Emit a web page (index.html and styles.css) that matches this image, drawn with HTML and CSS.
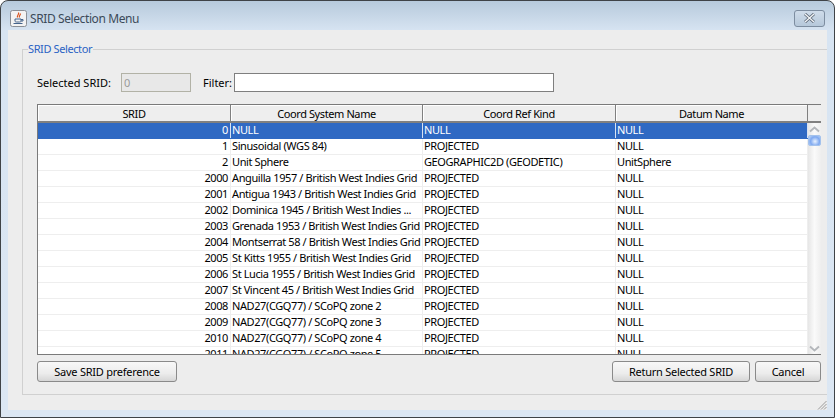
FILE: index.html
```html
<!DOCTYPE html>
<html lang="en">
<head>
    <meta charset="UTF-8">
    <title>SRID Selection Menu</title>
    <link rel="stylesheet" href="styles.css">
</head>
<body>
    <div class="window">
        <div class="titlebar">
            <svg class="app-icon" width="17" height="17" viewBox="0 0 17 17">
                <rect x="0.5" y="0.5" width="16" height="16" rx="2" fill="#f3f3f3" stroke="#8a8f96"/>
                <path d="M8.500 2.500c1 2-2 3-1 5M10.500 3.500c0 2-2 2-1 4" fill="none" stroke="#d9541e" stroke-width="1.200"/>
                <path d="M5 9h6v2c0 1-1 1-2 1H7c-1 0-2 0-2-1zM11 9.500h2v1.500h-2M3.500 13.500h9" fill="none" stroke="#45648c"/>
            </svg>
            <span class="title">SRID Selection Menu</span>
            <button class="close">
                <svg width="13" height="10" viewBox="0 0 13 10"><path d="M2 1l9 8M11 1l-9 8" stroke="#5a6675" stroke-width="3" fill="none"/><path d="M2 1l9 8M11 1l-9 8" stroke="#f2f4f6" stroke-width="1.400" fill="none"/></svg>
            </button>
        </div>
        <div class="content">
            <div class="selector">
                <span class="legend">SRID Selector</span>
                <div class="form-row">
                    <label class="srid-label">Selected SRID:</label>
                    <input class="srid-input" type="text" value="0" disabled>
                    <label class="filter-label">Filter:</label>
                    <input class="filter-input" type="text">
                </div>
                <div class="table-box">
                    <div class="table-main">
                        <div class="row header">
                            <div class="cell">SRID</div>
                            <div class="cell">Coord System Name</div>
                            <div class="cell">Coord Ref Kind</div>
                            <div class="cell">Datum Name</div>
                        </div>
                        <div class="rows" id="rows">
                            <div class="row selected"><div class="cell">0</div><div class="cell">NULL</div><div class="cell">NULL</div><div class="cell">NULL</div></div>
                            <div class="row"><div class="cell">1</div><div class="cell">Sinusoidal (WGS 84)</div><div class="cell">PROJECTED</div><div class="cell">NULL</div></div>
                            <div class="row"><div class="cell">2</div><div class="cell">Unit Sphere</div><div class="cell">GEOGRAPHIC2D (GEODETIC)</div><div class="cell">UnitSphere</div></div>
                            <div class="row"><div class="cell">2000</div><div class="cell">Anguilla 1957 / British West Indies Grid</div><div class="cell">PROJECTED</div><div class="cell">NULL</div></div>
                            <div class="row"><div class="cell">2001</div><div class="cell">Antigua 1943 / British West Indies Grid</div><div class="cell">PROJECTED</div><div class="cell">NULL</div></div>
                            <div class="row"><div class="cell">2002</div><div class="cell">Dominica 1945 / British West Indies ...</div><div class="cell">PROJECTED</div><div class="cell">NULL</div></div>
                            <div class="row"><div class="cell">2003</div><div class="cell">Grenada 1953 / British West Indies Grid</div><div class="cell">PROJECTED</div><div class="cell">NULL</div></div>
                            <div class="row"><div class="cell">2004</div><div class="cell">Montserrat 58 / British West Indies Grid</div><div class="cell">PROJECTED</div><div class="cell">NULL</div></div>
                            <div class="row"><div class="cell">2005</div><div class="cell">St Kitts 1955 / British West Indies Grid</div><div class="cell">PROJECTED</div><div class="cell">NULL</div></div>
                            <div class="row"><div class="cell">2006</div><div class="cell">St Lucia 1955 / British West Indies Grid</div><div class="cell">PROJECTED</div><div class="cell">NULL</div></div>
                            <div class="row"><div class="cell">2007</div><div class="cell">St Vincent 45 / British West Indies Grid</div><div class="cell">PROJECTED</div><div class="cell">NULL</div></div>
                            <div class="row"><div class="cell">2008</div><div class="cell">NAD27(CGQ77) / SCoPQ zone 2</div><div class="cell">PROJECTED</div><div class="cell">NULL</div></div>
                            <div class="row"><div class="cell">2009</div><div class="cell">NAD27(CGQ77) / SCoPQ zone 3</div><div class="cell">PROJECTED</div><div class="cell">NULL</div></div>
                            <div class="row"><div class="cell">2010</div><div class="cell">NAD27(CGQ77) / SCoPQ zone 4</div><div class="cell">PROJECTED</div><div class="cell">NULL</div></div>
                            <div class="row"><div class="cell">2011</div><div class="cell">NAD27(CGQ77) / SCoPQ zone 5</div><div class="cell">PROJECTED</div><div class="cell">NULL</div></div>
                        </div>
                    </div>
                    <div class="scrollbar">
                        <div class="scroll-top"></div>
                        <div class="scroll-track">
                            <svg class="arrow" width="11" height="7" viewBox="0 0 11 7"><path d="M1 5.500l4.500-4 4.500 4" fill="none" stroke="#b4b7bb" stroke-width="1.800"/></svg>
                            <div class="thumb"></div>
                            <svg class="arrow arrow-down" width="11" height="7" viewBox="0 0 11 7"><path d="M1 1.500l4.500 4 4.500-4" fill="none" stroke="#b4b7bb" stroke-width="1.800"/></svg>
                        </div>
                    </div>
                </div>
                <div class="button-row">
                    <button class="btn btn-save">Save SRID preference</button>
                    <button class="btn btn-return">Return Selected SRID</button>
                    <button class="btn btn-cancel">Cancel</button>
                </div>
            </div>
            <svg class="grip" width="10" height="10" viewBox="0 0 10 10"><path d="M9.500 1L1 9.500M9.500 4L4 9.500M9.500 7L7 9.500" stroke="#9a9a9a" fill="none"/></svg>
        </div>
    </div>
</body>
</html>
```
FILE: styles.css
```css
* {
    box-sizing: border-box;
}
html, body {
    margin: 0;
    height: 100%;
    overflow: hidden;
    background: #fff;
}
body {
    font-family: "Noto Sans", "Liberation Sans", sans-serif;
    font-size: 11px;
    color: #000;
}
.window {
    height: 418px;
    display: flex;
    flex-direction: column;
    border: 1px solid #3f4347;
    border-radius: 8px 8px 0 0;
    padding: 0 7px 7px;
    background: linear-gradient(#b7cadc 0, #d7e4f2 30px, #dce7f3 100%);
}
.titlebar {
    height: 29px;
    flex: none;
    display: flex;
    align-items: center;
    padding: 5px 0 0 2px;
}
.app-icon {
    margin-right: 3px;
}
.title {
    font-size: 12px;
    letter-spacing: -0.4px;
    color: #3c4a59;
}
.close {
    margin-left: auto;
    margin-right: 2px;
    width: 31px;
    height: 17px;
    padding: 0;
    display: flex;
    align-items: center;
    justify-content: center;
    border: 1px solid #7d8da0;
    border-radius: 3px;
    background: linear-gradient(#cfdcea, #b6c8da);
}
.content {
    flex: 1;
    position: relative;
    background: #ededed;
    padding: 19px 0 15px 14px;
    display: flex;
}
.selector {
    flex: 1;
    border: 1px solid #d0d0d0;
    border-right: none;
    padding: 14px 0 0 14px;
    position: relative;
}
.legend {
    position: absolute;
    top: -9px;
    left: 5px;
    background: #ededed;
    padding-right: 1px;
    letter-spacing: -0.4px;
    color: #2a62c4;
}
.form-row {
    display: flex;
    align-items: center;
    height: 19px;
    margin-top: 9px;
}
.srid-label {
    width: 84px;
}
.srid-input {
    width: 70px;
    height: 19px;
    border: 1px solid #b2b2a6;
    background: #e8e8e8;
    color: #9a9a9a;
    font: inherit;
    padding: 0 2px;
}
.filter-label {
    margin-left: 12px;
    width: 31px;
}
.filter-input {
    width: 320px;
    height: 19px;
    border: 1px solid #7f7f7f;
    background: #fff;
    font: inherit;
}
.table-box {
    margin-top: 12px;
    width: 784px;
    height: 251px;
    border: 1px solid #7a7a7a;
    background: #fff;
    display: flex;
}
.table-main {
    width: 770px;
    flex: none;
    display: flex;
    flex-direction: column;
    overflow: hidden;
}
.rows {
    flex: 1;
    overflow: hidden;
}
.row {
    display: grid;
    grid-template-columns: 193px 192px 193px 192px;
    height: 16px;
    line-height: 14px;
    letter-spacing: -0.4px;
    border-bottom: 1px solid #eeeeee;
}
.cell {
    white-space: nowrap;
    overflow: hidden;
    border-right: 1px solid #eeeeee;
    padding: 0 0 0 1px;
}
.cell:first-child {
    text-align: right;
    padding-right: 2px;
}
.row.selected {
    background: #2f69c3;
    color: #fff;
    border-bottom-color: #2f69c3;
}
.row.selected .cell {
    border-right-color: #d8e2f2;
}
.row.header {
    height: 18px;
    line-height: 17px;
    background: #eeeeee;
    border-bottom: 2px solid #808080;
    flex: none;
}
.row.header .cell {
    text-align: center;
    padding: 0 1px;
    border-right: 1px solid #808080;
    box-shadow: inset 1px 1px 0 #fff;
}
.scrollbar {
    flex: 1;
    display: flex;
    flex-direction: column;
}
.scroll-top {
    height: 18px;
    background: #eeeeee;
    border-bottom: 2px solid #808080;
}
.scroll-track {
    flex: 1;
    position: relative;
    background: linear-gradient(90deg, #e6e6e6, #fafafa 50%, #eeeeee);
    display: flex;
    flex-direction: column;
    align-items: center;
    padding-top: 3px;
}
.thumb {
    width: 13px;
    height: 11px;
    margin-top: 2px;
    border: 1px solid #a4c2ec;
    border-radius: 2px;
    background: radial-gradient(circle at 55% 60%, #e9f2ff 0, #7fa9f0 55%, #c4d9f6 100%);
}
.arrow-down {
    margin-top: auto;
    margin-bottom: 2px;
}
.button-row {
    display: flex;
    width: 784px;
    margin-top: 6px;
}
.btn {
    height: 21px;
    padding: 0;
    font: inherit;
    letter-spacing: -0.25px;
    color: #000;
    border: 1px solid #8a8a8a;
    border-radius: 3px;
    background: linear-gradient(#f8f8f8, #ececec 60%, #d6d6d6);
}
.btn-save {
    width: 140px;
}
.btn-return {
    width: 138px;
    margin-left: auto;
}
.btn-cancel {
    width: 66px;
    margin-left: 5px;
}
.grip {
    position: absolute;
    right: 0;
    bottom: 0;
}
```
